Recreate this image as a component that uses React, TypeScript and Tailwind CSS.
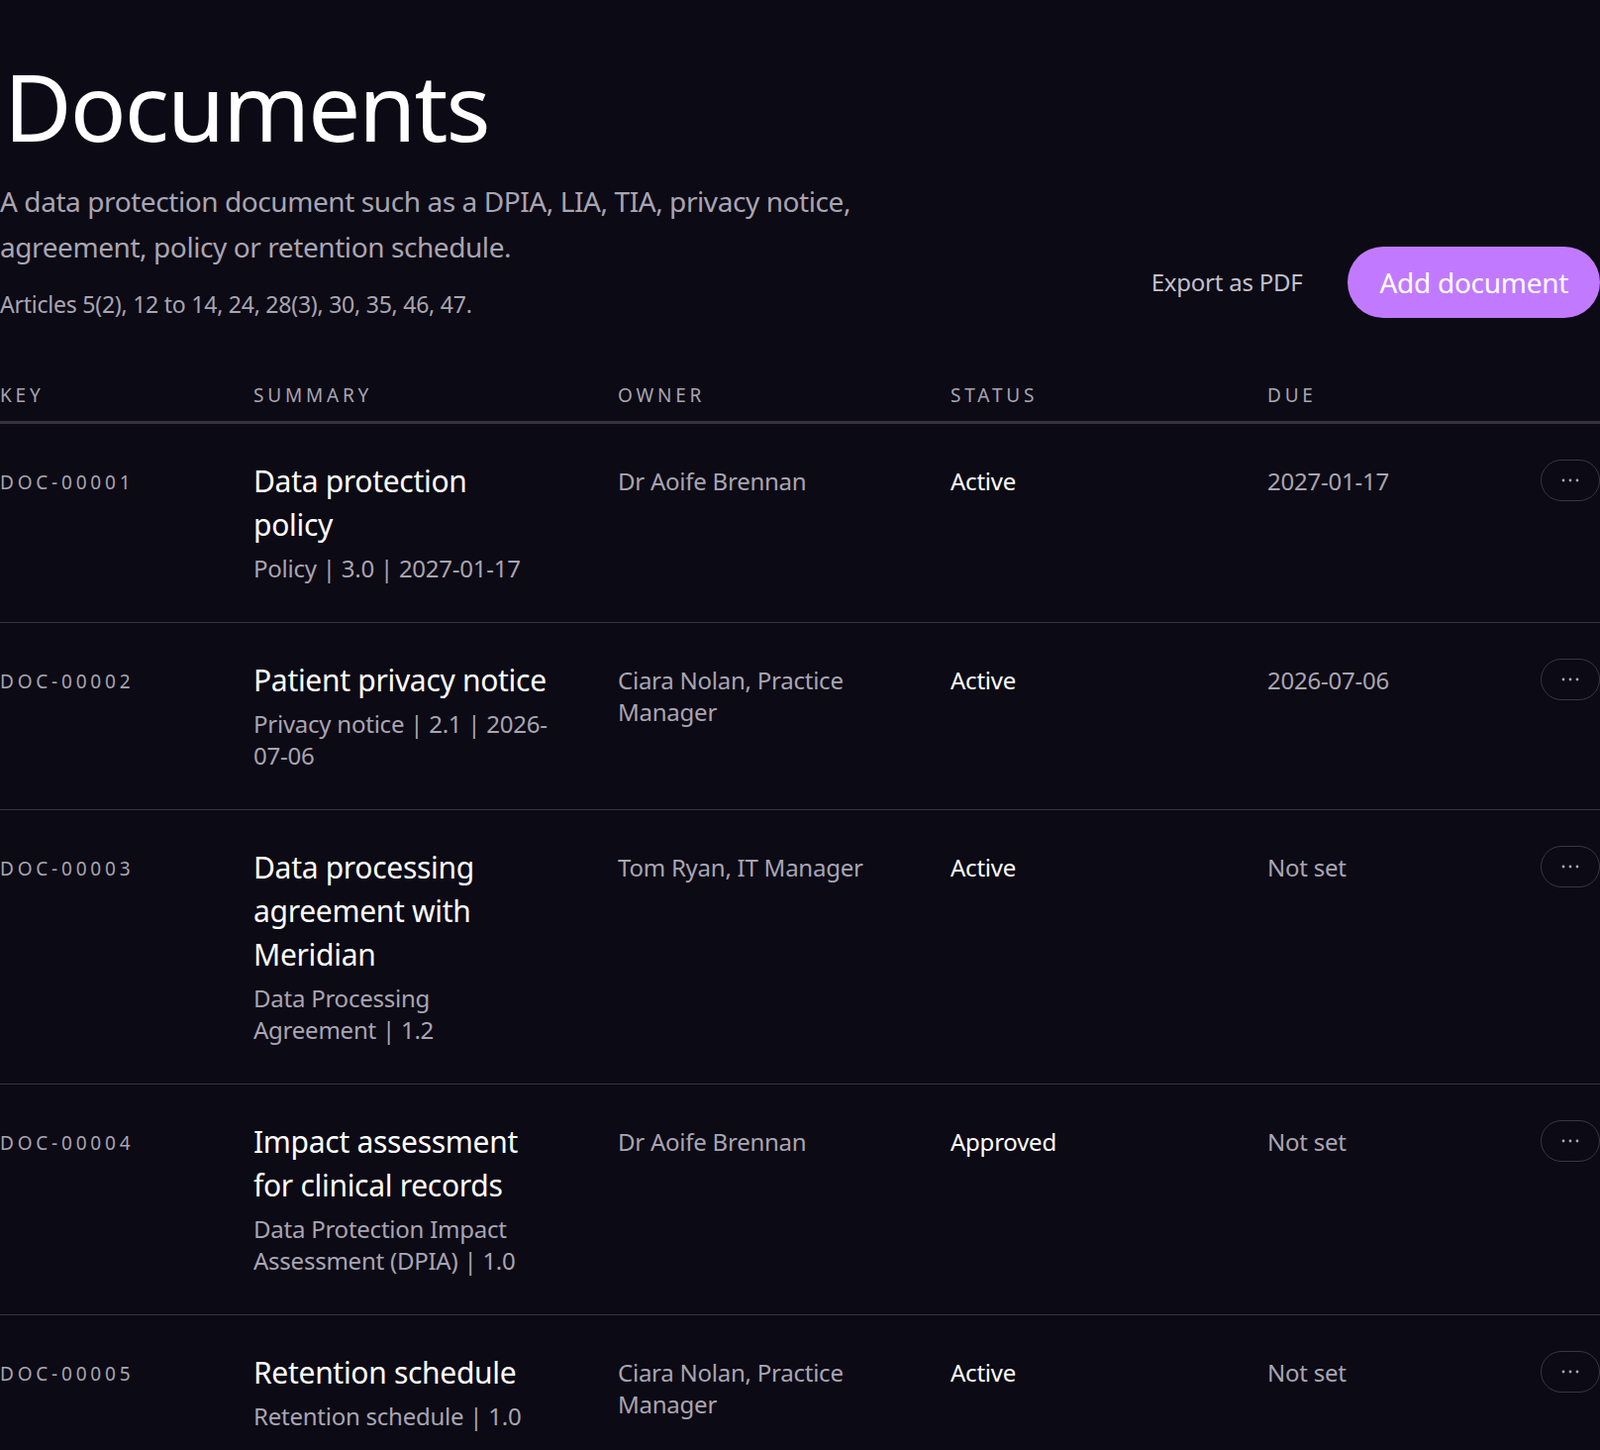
import React from "react";

type Doc = {
  key: string;
  title: string;
  meta: string;
  owner: string;
  status: string;
  due: string;
};

const docs: Doc[] = [
  { key: "DOC-00001", title: "Data protection policy", meta: "Policy | 3.0 | 2027-01-17", owner: "Dr Aoife Brennan", status: "Active", due: "2027-01-17" },
  { key: "DOC-00002", title: "Patient privacy notice", meta: "Privacy notice | 2.1 | 2026-07-06", owner: "Ciara Nolan, Practice Manager", status: "Active", due: "2026-07-06" },
  { key: "DOC-00003", title: "Data processing agreement with Meridian", meta: "Data Processing Agreement | 1.2", owner: "Tom Ryan, IT Manager", status: "Active", due: "Not set" },
  { key: "DOC-00004", title: "Impact assessment for clinical records", meta: "Data Protection Impact Assessment (DPIA) | 1.0", owner: "Dr Aoife Brennan", status: "Approved", due: "Not set" },
  { key: "DOC-00005", title: "Retention schedule", meta: "Retention schedule | 1.0", owner: "Ciara Nolan, Practice Manager", status: "Active", due: "Not set" },
];

const cols = "grid grid-cols-[256px_368px_336px_320px_1fr_60px]";

function Dots() {
  return (
    <svg width="20" height="6" viewBox="0 0 20 6" className="mx-auto">
      <circle cx="3" cy="3" r="1.4" fill="#a9a5b3" />
      <circle cx="10" cy="3" r="1.4" fill="#a9a5b3" />
      <circle cx="17" cy="3" r="1.4" fill="#a9a5b3" />
    </svg>
  );
}

export default function App() {
  return (
    <div className="min-h-screen bg-[#0c0a14] text-white font-['Inter',sans-serif] overflow-hidden">
      <div className="pt-[60px] flex items-end justify-between">
        <div>
          <h1 className="text-[94px] leading-none tracking-[-0.02em] font-normal pl-[4px]">Documents</h1>
          <p className="mt-[26px] text-[28px] leading-[46px] text-[#a9a5b3] max-w-[870px] tracking-[-0.015em]">
            A data protection document such as a DPIA, LIA, TIA, privacy notice, agreement, policy or retention schedule.
          </p>
          <p className="mt-[18px] text-[23px] text-[#a9a5b3] tracking-[-0.01em]">Articles 5(2), 12 to 14, 24, 28(3), 30, 35, 46, 47.</p>
        </div>
        <div className="flex items-center gap-[46px] mb-[4px]">
          <button className="text-[24px] text-[#c4c0cc] tracking-[-0.01em]">Export as PDF</button>
          <button className="h-[72px] px-[32px] rounded-full bg-[#c17aff] text-[28px] text-white tracking-[-0.01em]">Add document</button>
        </div>
      </div>

      <div className={`${cols} mt-[60px] pb-[12px] border-b-[3px] border-[#36323f] text-[19px] tracking-[0.2em] text-[#a9a5b3]`}>
        <div>KEY</div>
        <div>SUMMARY</div>
        <div>OWNER</div>
        <div>STATUS</div>
        <div>DUE</div>
        <div />
      </div>

      {docs.map((d, i) => (
        <div
          key={d.key}
          className={`${cols} pt-[36px] pb-[38px] ${i < docs.length - 1 ? "border-b border-[#36323f]" : ""}`}
        >
          <div className="text-[19px] tracking-[0.2em] text-[#a9a5b3] pt-[9px]">{d.key}</div>
          <div className="max-w-[300px]">
            <div className="text-[30px] leading-[44px] tracking-[-0.01em]">{d.title}</div>
            <div className="mt-[6px] text-[24px] leading-[32px] text-[#a9a5b3] tracking-[-0.01em]">{d.meta}</div>
          </div>
          <div className="pr-[50px] pt-[6px] text-[24px] leading-[32px] text-[#a9a5b3] tracking-[-0.01em]">{d.owner}</div>
          <div className="pt-[6px] text-[24px] leading-[32px] tracking-[-0.01em]">{d.status}</div>
          <div className="pt-[6px] text-[24px] leading-[32px] text-[#a9a5b3] tracking-[-0.01em]">{d.due}</div>
          <div>
            <button className="w-[60px] h-[42px] rounded-full border-[1.5px] border-[#3a3645] flex items-center justify-center">
              <Dots />
            </button>
          </div>
        </div>
      ))}
    </div>
  );
}
